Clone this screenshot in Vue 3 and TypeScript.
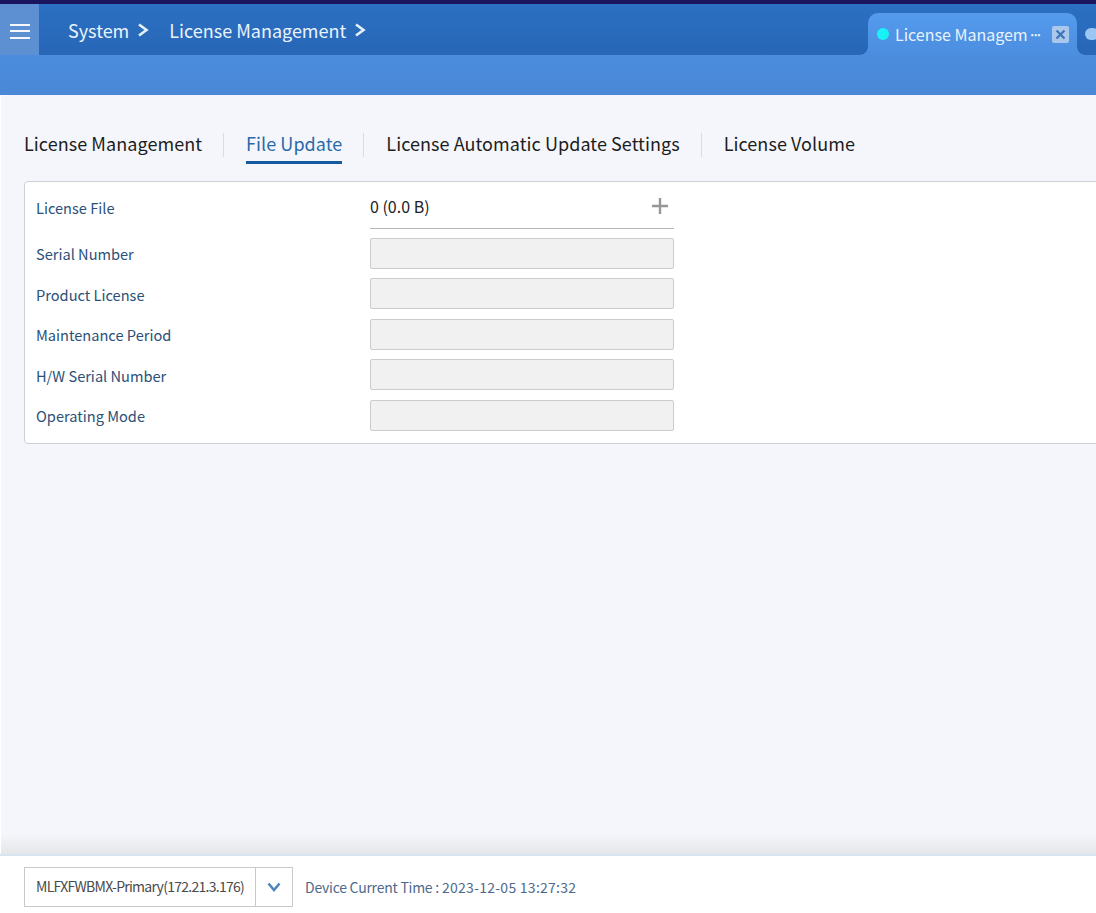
<template>
  <div class="page">
    <header class="top">
      <div class="top-bar">
        <button class="menu-btn">
          <span></span><span></span><span></span>
        </button>
        <nav class="crumbs">
          <div v-for="c in crumbs" :key="c" class="crumb">
            <span>{{ c }}</span>
            <svg width="12" height="14" viewBox="0 0 12 14">
              <path d="M2 1.5 L9.5 7 L2 12.5" fill="none" stroke="#e6f1fc" stroke-width="2.6" />
            </svg>
          </div>
        </nav>
        <div class="open-tabs">
          <div class="open-tab">
            <i class="dot"></i>
            <span class="open-tab-name">License Managem<span class="more">···</span></span>
            <svg class="close" width="17" height="17" viewBox="0 0 17 17">
              <rect width="17" height="17" rx="2" fill="#a9c8ec" />
              <path d="M4.5 4.5 L12.5 12.5 M12.5 4.5 L4.5 12.5" stroke="#3f74b8" stroke-width="2.2" />
            </svg>
          </div>
          <div class="open-tab-next">
            <i class="dot-next"></i>
          </div>
        </div>
      </div>
      <div class="sub-bar"></div>
    </header>

    <main class="content">
      <div class="tabs">
        <template v-for="(t, i) in tabs" :key="t">
          <i v-if="i > 0" class="tab-sep"></i>
          <a class="tab" :class="{ active: t === 'File Update' }">{{ t }}</a>
        </template>
      </div>

      <section class="card">
        <div class="row first">
          <label>License File</label>
          <div class="file-box">
            <span>0 (0.0 B)</span>
            <svg width="16" height="16" viewBox="0 0 16 16">
              <path d="M8 0 V16 M0 8 H16" stroke="#979797" stroke-width="2.4" />
            </svg>
          </div>
        </div>
        <div v-for="f in fields" :key="f" class="row">
          <label>{{ f }}</label>
          <div class="ro-input"></div>
        </div>
      </section>
    </main>

    <footer class="foot">
      <div class="device">
        <span class="device-name">MLFXFWBMX-Primary(172.21.3.176)</span>
        <span class="device-arrow">
          <svg width="14" height="10" viewBox="0 0 14 10">
            <path d="M1.5 1.5 L7 8 L12.5 1.5" fill="none" stroke="#4f86c0" stroke-width="2.6" />
          </svg>
        </span>
      </div>
      <div class="time">
        <span class="time-label">Device Current Time :</span>
        <span class="time-value">2023-12-05 13:27:32</span>
      </div>
    </footer>
  </div>
</template>

<script setup lang="ts">
const crumbs: string[] = ["System", "License Management"];
const tabs: string[] = [
  "License Management",
  "File Update",
  "License Automatic Update Settings",
  "License Volume",
];
const fields: string[] = [
  "Serial Number",
  "Product License",
  "Maintenance Period",
  "H/W Serial Number",
  "Operating Mode",
];
</script>

<style scoped>
.page {
  width: 1096px;
  height: 913px;
  display: flex;
  flex-direction: column;
  overflow: hidden;
  background: #f4f6fb;
  font-family: "Noto Sans CJK KR", "Noto Sans", sans-serif;
}
.top {
  flex: none;
  border-top: 4px solid #1b1560;
}
.top-bar {
  height: 51px;
  display: flex;
  background: linear-gradient(#2b70c2, #2866b6);
}
.menu-btn {
  width: 39px;
  border: 0;
  padding: 3px 9px 0 10px;
  background: #5c90d2;
  display: flex;
  flex-direction: column;
  justify-content: center;
  gap: 4.5px;
}
.menu-btn span {
  display: block;
  height: 2px;
  background: #f4f8fd;
}
.crumbs {
  display: flex;
  align-items: center;
  padding: 1px 0 0 29px;
  gap: 20px;
  color: #e9f3fd;
  font-size: 18px;
}
.crumb {
  display: flex;
  align-items: center;
  gap: 8px;
}
.open-tabs {
  margin-left: auto;
  display: flex;
  align-items: flex-end;
  gap: 8px;
  width: 228px;
  flex: none;
}
.open-tab {
  position: relative;
  width: 209px;
  height: 42px;
  flex: none;
  border-radius: 10px 10px 0 0;
  background: linear-gradient(#549bee, #4c8ddf);
  display: flex;
  align-items: center;
  padding: 0 8px 0 9px;
  box-sizing: border-box;
  color: #e9f3fd;
  font-size: 16px;
}
.open-tab::before,
.open-tab::after {
  content: "";
  position: absolute;
  bottom: 0;
  width: 8px;
  height: 8px;
}
.open-tab::before {
  left: -8px;
  background: radial-gradient(circle at 0 0, transparent 7.5px, #4c8ddf 8px);
}
.open-tab::after {
  right: -8px;
  background: radial-gradient(circle at 100% 0, transparent 7.5px, #4c8ddf 8px);
}
.dot {
  width: 12px;
  height: 12px;
  border-radius: 50%;
  background: #18f2f6;
  flex: none;
}
.open-tab-name {
  margin-left: 6px;
  flex: 1;
  white-space: nowrap;
  overflow: hidden;
}
.more {
  letter-spacing: -5.5px;
}
.close {
  flex: none;
}
.open-tab-next {
  width: 40px;
  height: 42px;
  flex: none;
  display: flex;
  align-items: center;
}
.dot-next {
  width: 14px;
  height: 12px;
  border-radius: 6px;
  background: #9cc6f4;
}
.sub-bar {
  height: 40px;
  background: linear-gradient(#4c8ddf, #4a88d6);
}
.content {
  flex: 1;
  min-height: 0;
  padding: 30px 0 0 23px;
  border-left: 1px solid #fff;
  background: linear-gradient(#f4f6fb calc(100% - 20px), #e4e6e8);
}
.tabs {
  display: flex;
  align-items: center;
  height: 39px;
  white-space: nowrap;
}
.tab {
  height: 39px;
  line-height: 36px;
  box-sizing: border-box;
  color: #1d1d1d;
  font-size: 18px;
  letter-spacing: 0.06px;
}
.tab.active {
  color: #2a6aa8;
  border-bottom: 3px solid #155a9e;
}
.tab-sep {
  width: 1px;
  height: 24px;
  margin: 0 21.9px 0 21.1px;
  background: #d8dde3;
}
.card {
  margin: 17px -20px 0 0;
  height: 263px;
  box-sizing: border-box;
  padding: 7px 0 0 11px;
  background: #fff;
  border: 1px solid #ccd0d6;
  border-radius: 4px;
}
.row {
  display: flex;
  align-items: center;
  height: 31px;
  margin-top: 9.5px;
}
.row.first {
  height: 40px;
  margin: 0 0 -0.6px;
}
.row label {
  width: 334px;
  flex: none;
  padding-top: 0.4px;
  color: #2b5079;
  font-size: 14.6px;
}
.row.first label {
  padding: 0 0 4px;
}
.file-box {
  width: 304px;
  height: 40px;
  box-sizing: border-box;
  border-bottom: 1px solid #b5b5b5;
  display: flex;
  align-items: center;
  justify-content: space-between;
  padding: 0 6px 5px 0;
  color: #222;
  font-size: 16px;
}
.ro-input {
  width: 304px;
  height: 31px;
  box-sizing: border-box;
  background: #f1f1f1;
  border: 1px solid #ccc;
  border-radius: 2px;
}
.foot {
  flex: none;
  height: 59px;
  box-sizing: border-box;
  border-top: 2px solid #d6e4f3;
  background: #fff;
  display: flex;
  align-items: center;
  padding: 0 0 0 24px;
}
.device {
  width: 269px;
  height: 40px;
  box-sizing: border-box;
  border: 1px solid #c9c9c9;
  display: flex;
  align-items: center;
  margin-top: 5px;
}
.device-name {
  width: 230px;
  padding: 0 0 2px 11px;
  box-sizing: border-box;
  white-space: nowrap;
  color: #4a4a4a;
  font-size: 14px;
  letter-spacing: -0.73px;
}
.device-arrow {
  flex: 1;
  height: 100%;
  border-left: 1px solid #c9c9c9;
  display: flex;
  align-items: center;
  justify-content: center;
}
.time {
  display: flex;
  gap: 3px;
  margin: 4px 0 0 12px;
  color: #4d6a8c;
  font-size: 14px;
}
.time-label {
  letter-spacing: -0.24px;
}
.time-value {
  letter-spacing: 0.26px;
}
</style>

<style>
html,
body {
  margin: 0;
  background: #f4f6fb;
}
</style>
